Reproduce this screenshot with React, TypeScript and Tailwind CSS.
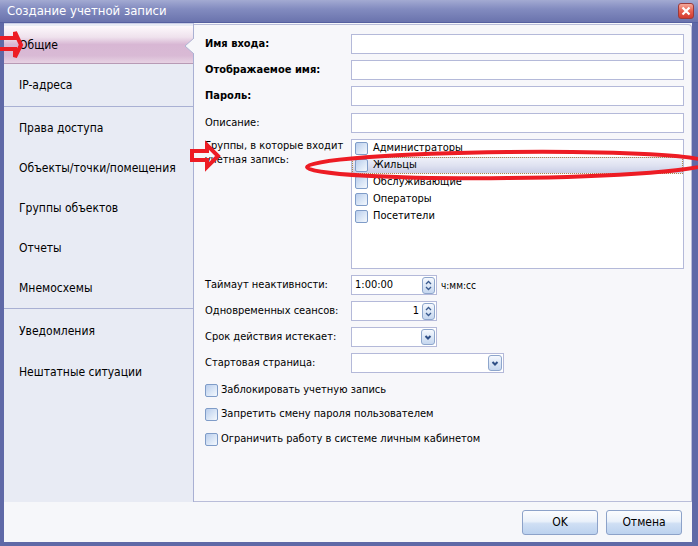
import type { ReactNode } from "react";
import { clsx, type ClassValue } from "clsx";
import { twMerge } from "tailwind-merge";

function cn(...inputs: ClassValue[]) {
  return twMerge(clsx(inputs));
}

const GROUPS = ["Администраторы", "Жильцы", "Обслуживающие", "Операторы", "Посетители"];

function Check() {
  return (
    <span className="w-[13px] h-[13px] shrink-0 rounded-[2px] border border-[#7f9cc8] bg-[linear-gradient(135deg,#b9cdec_0%,#dae6f6_55%,#f4f8fd_100%)]" />
  );
}

function SpinButton() {
  return (
    <span className="w-[13px] h-[17px] mr-[1px] rounded-[3px] border border-[#8ea6cc] bg-[linear-gradient(to_bottom,#f6f9fe_0%,#dce7f6_50%,#c6d7ef_100%)] flex items-center justify-center">
      <svg width="11" height="15" viewBox="0 0 11 15">
        <path d="M3 6 L5.5 3.5 L8 6" fill="none" stroke="#3a5a8e" strokeWidth="1.3" />
        <path d="M3 9 L5.5 11.5 L8 9" fill="none" stroke="#3a5a8e" strokeWidth="1.3" />
      </svg>
    </span>
  );
}

function DropButton() {
  return (
    <span className="w-[14px] h-[16px] mr-[1px] rounded-[3px] border border-[#8ea6cc] bg-[linear-gradient(to_bottom,#f6f9fe_0%,#dce7f6_50%,#c6d7ef_100%)] flex items-center justify-center">
      <svg width="12" height="14" viewBox="0 0 12 14">
        <path d="M3.5 6 L6 8.5 L8.5 6" fill="none" stroke="#2f4f86" strokeWidth="2" />
      </svg>
    </span>
  );
}

function Row({ label, bold, className, children }: { label: ReactNode; bold?: boolean; className?: string; children?: ReactNode }) {
  return (
    <div className={cn("flex items-center h-[20px]", className)}>
      <div className={cn("w-[146px] shrink-0", bold && "font-bold")}>{label}</div>
      {children}
    </div>
  );
}

function NavItem({ label, className }: { label: string; className?: string }) {
  return <div className={cn("h-[40px] flex items-center pl-[15px]", className)}>{label}</div>;
}

export default function App() {
  const inputCls = "h-[20px] border border-[#b4b9d9] bg-white flex items-center";

  return (
    <div className="relative w-[698px] h-[546px] bg-[#5f69a7] flex flex-col overflow-hidden text-black font-['Tahoma','DejaVu_Sans_Condensed','Liberation_Sans',sans-serif]">
      {/* Title bar */}
      <div className="h-[23px] shrink-0 flex items-center justify-between pl-[7px] pr-[4px] bg-[linear-gradient(to_bottom,#a3aad2_0%,#838cc0_40%,#6a73ad_100%)] border-b border-[#5560a0]">
        <span className="text-white text-[13px]">Создание учетной записи</span>
        <span className="w-[16px] h-[16px] rounded-[3px] border border-[#9c3a3a] bg-[linear-gradient(to_bottom,#f5a89b_0%,#e8604f_50%,#d23a2e_100%)] flex items-center justify-center">
          <svg width="10" height="10" viewBox="0 0 10 10">
            <path d="M1.5 1.5 L8.5 8.5 M8.5 1.5 L1.5 8.5" stroke="#fff" strokeWidth="2.2" />
          </svg>
        </span>
      </div>

      {/* Body */}
      <div className="flex-1 flex flex-col ml-[4px] mr-[6px] mb-[4px] bg-[#f6f7fa]">
        <div className="flex-1 flex min-h-0">
          {/* Sidebar */}
          <aside className="w-[190px] shrink-0 bg-[#e8ebf4] border-r border-[#a9b0d3] border-t border-t-[#c9cde6] pt-[2px] flex flex-col text-[12px]">
            <div className="relative h-[38px] flex items-center pl-[15px] border-b border-[#b89ab5] bg-[linear-gradient(to_bottom,#fdf9fc_0%,#efe2ed_30%,#d8b7d4_50%,#d9bad5_80%,#e7d2e3_100%)]">
              Общие
              <svg className="absolute right-[-1px] top-[12px]" width="10" height="16" viewBox="0 0 10 16">
                <polygon points="10,0 1,8 10,16" fill="#f7f7fa" />
                <path d="M10 0 L1 8 L10 16" fill="none" stroke="#aeb3d3" strokeWidth="1" />
              </svg>
            </div>
            <NavItem label="IP-адреса" className="h-[42px]" />
            <div className="h-px bg-[#a9b0d3]" />
            <NavItem label="Права доступа" className="h-[41px]" />
            <NavItem label="Объекты/точки/помещения" />
            <NavItem label="Группы объектов" />
            <NavItem label="Отчеты" />
            <NavItem label="Мнемосхемы" />
            <div className="h-px bg-[#a9b0d3]" />
            <NavItem label="Уведомления" className="h-[43px]" />
            <NavItem label="Нештатные ситуации" />
          </aside>

          {/* Main panel */}
          <main className="flex-1 mt-[1px] bg-[#f7f7fa] border border-l-0 border-[#b9bdd9] rounded-tr-[4px] pl-[11px] pr-[7px] pt-[9px] text-[11px]">
            <Row label="Имя входа:" bold>
              <div className={cn(inputCls, "flex-1")} />
            </Row>
            <Row label="Отображаемое имя:" bold className="mt-[6px]">
              <div className={cn(inputCls, "flex-1")} />
            </Row>
            <Row label="Пароль:" bold className="mt-[6px]">
              <div className={cn(inputCls, "flex-1")} />
            </Row>
            <Row label="Описание:" className="mt-[7px]">
              <div className={cn(inputCls, "flex-1")} />
            </Row>

            <div className="flex mt-[6px]">
              <div className="w-[146px] shrink-0 leading-[14px]">
                Группы, в которые входит
                <br />
                учетная запись:
              </div>
              <div className="flex-1 h-[130px] border border-[#b4b9d9] bg-white">
                {GROUPS.map((g, i) => (
                  <div
                    key={g}
                    className={cn(
                      "h-[17px] flex items-center gap-[5px] pl-[3px]",
                      i === 1 && "border border-dotted border-[#b08a4a] pl-[2px] bg-[linear-gradient(to_bottom,#eef0f9_0%,#dfe2f1_50%,#c9cee6_100%)]"
                    )}
                  >
                    <Check />
                    <span>{g}</span>
                  </div>
                ))}
              </div>
            </div>

            <Row label="Таймаут неактивности:" className="mt-[6px]">
              <div className={cn(inputCls, "w-[86px] justify-between pl-[3px]")}>
                <span>1:00:00</span>
                <SpinButton />
              </div>
              <span className="ml-[4px] text-[10px]">ч:мм:сс</span>
            </Row>
            <Row label="Одновременных сеансов:" className="mt-[6px]">
              <div className={cn(inputCls, "w-[86px] justify-end gap-[3px]")}>
                <span>1</span>
                <SpinButton />
              </div>
            </Row>
            <Row label="Срок действия истекает:" className="mt-[6px]">
              <div className={cn(inputCls, "w-[86px] justify-end")}>
                <DropButton />
              </div>
            </Row>
            <Row label="Стартовая страница:" className="mt-[6px]">
              <div className={cn(inputCls, "w-[153px] justify-end")}>
                <DropButton />
              </div>
            </Row>

            <div className="flex items-center gap-[3px] h-[16px] mt-[9px]">
              <Check />
              <span>Заблокировать учетную запись</span>
            </div>
            <div className="flex items-center gap-[3px] h-[16px] mt-[8px]">
              <Check />
              <span>Запретить смену пароля пользователем</span>
            </div>
            <div className="flex items-center gap-[3px] h-[16px] mt-[9px]">
              <Check />
              <span>Ограничить работу в системе личным кабинетом</span>
            </div>
          </main>
        </div>

        {/* Footer */}
        <div className="h-[40px] shrink-0 flex items-center justify-end gap-[8px] pr-[10px] text-[12px]">
          <button className="w-[76px] h-[25px] rounded-[3px] border border-[#8ca2c9] bg-[linear-gradient(to_bottom,#fbfcfe_0%,#eaf1fa_45%,#cfdff4_55%,#bcd2ef_100%)]">
            OK
          </button>
          <button className="w-[76px] h-[25px] rounded-[3px] border border-[#8ca2c9] bg-[linear-gradient(to_bottom,#fbfcfe_0%,#eaf1fa_45%,#cfdff4_55%,#bcd2ef_100%)]">
            Отмена
          </button>
        </div>
      </div>

      {/* Red annotations drawn over the screenshot */}
      <svg className="absolute inset-0 pointer-events-none" width="698" height="546" viewBox="0 0 698 546">
        <polygon points="-3,38 15,38 15,32 21,45 15,57 15,49 -3,49" fill="none" stroke="#ed1c24" strokeWidth="4" strokeLinejoin="miter" />
        <polygon points="192,151 207,151 207,145 218,156 207,167 207,160 192,160" fill="none" stroke="#ed1c24" strokeWidth="4" strokeLinejoin="miter" />
        <ellipse cx="508" cy="165" rx="201" ry="13" fill="none" stroke="#ed1c24" strokeWidth="4" transform="rotate(-0.6 508 165)" />
      </svg>
    </div>
  );
}
